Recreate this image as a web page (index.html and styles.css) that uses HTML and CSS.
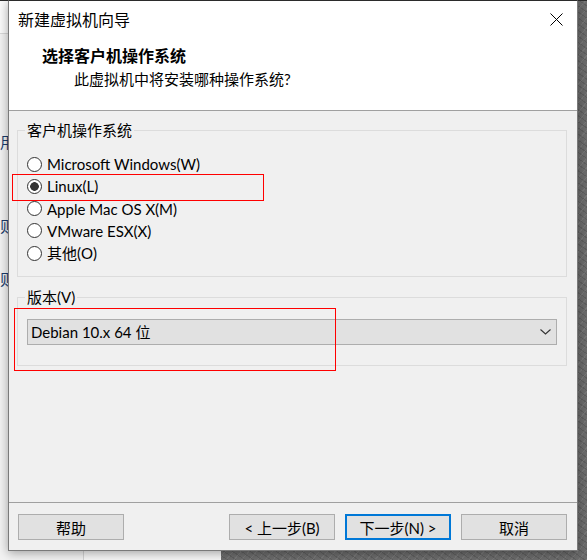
FILE: index.html
```html
<!DOCTYPE html>
<html lang="zh-CN">
<head>
    <meta charset="UTF-8">
    <meta name="viewport" content="width=device-width, initial-scale=1.0">
    <title>新建虚拟机向导</title>
    <link rel="stylesheet" href="styles.css">
</head>
<body>
    <div class="desktop">
        <!-- window behind the dialog -->
        <div class="bg-window">
            <div class="bg-toolbar"></div>
            <div class="bg-sidebar"></div>
            <span class="bg-char bg-char-1">用</span>
            <span class="bg-char bg-char-2">则</span>
            <span class="bg-char bg-char-3">则</span>
        </div>

        <div class="dialog">
            <div class="titlebar">
                <span class="title">新建虚拟机向导</span>
                <span class="close">
                    <svg width="13" height="13" viewBox="0 0 13 13">
                        <path d="M0.5 0.5L12.5 12.5M12.5 0.5L0.5 12.5" stroke="#000" stroke-width="1" fill="none"/>
                    </svg>
                </span>
            </div>

            <div class="header">
                <div class="header-title">选择客户机操作系统</div>
                <div class="header-sub">此虚拟机中将安装哪种操作系统?</div>
            </div>

            <div class="content">
                <fieldset class="group group-os">
                    <legend>客户机操作系统</legend>
                    <div class="radio-list">
                        <label class="radio-row"><input type="radio" name="os" class="radio">Microsoft Windows(W)</label>
                        <label class="radio-row"><input type="radio" name="os" class="radio" checked>Linux(L)</label>
                        <label class="radio-row"><input type="radio" name="os" class="radio">Apple Mac OS X(M)</label>
                        <label class="radio-row"><input type="radio" name="os" class="radio">VMware ESX(X)</label>
                        <label class="radio-row"><input type="radio" name="os" class="radio">其他(O)</label>
                    </div>
                </fieldset>

                <fieldset class="group group-version">
                    <legend>版本(V)</legend>
                    <div class="combo">
                        <span>Debian 10.x 64 位</span>
                        <svg width="11" height="6" viewBox="0 0 11 6">
                            <path d="M0.5 0.5L5.5 5L10.5 0.5" stroke="#333" stroke-width="1.1" fill="none"/>
                        </svg>
                    </div>
                </fieldset>
            </div>

            <div class="footer">
                <button class="btn btn-help">帮助</button>
                <button class="btn">&lt; 上一步(B)</button>
                <button class="btn btn-primary">下一步(N) &gt;</button>
                <button class="btn">取消</button>
            </div>
        </div>

        <!-- red annotation boxes -->
        <div class="mark mark-linux"></div>
        <div class="mark mark-version"></div>
    </div>
</body>
</html>
```

FILE: styles.css
```css
body {
    margin: 0;
    font-family: Lato, "Noto Sans CJK SC", sans-serif;
    font-size: 15px;
    color: #000;
}
.desktop {
    position: relative;
    width: 587px;
    height: 560px;
    overflow: hidden;
    background-color: #6c6c6c;
    background-image:
        linear-gradient(#2b2b2b, #2b2b2b),
        repeating-linear-gradient(35deg, rgba(0,0,0,0.12) 0 1px, transparent 1px 5px),
        repeating-linear-gradient(-50deg, rgba(255,255,255,0.08) 0 1px, transparent 1px 6px);
    background-size: 100% 1px, auto, auto;
    background-repeat: no-repeat, repeat, repeat;
}
.bg-window {
    position: absolute;
    left: 0;
    top: 1px;
    width: 221px;
    height: 559px;
    background: #f7f7f7;
}
.bg-toolbar {
    height: 32px;
    border-bottom: 1px solid #d9d9d9;
    background: #fbfbfb;
}
.bg-sidebar {
    width: 83px;
    height: 526px;
    border-right: 1px solid #d4d4d4;
    background: #f3f3f3;
}
.bg-char {
    position: absolute;
    left: 0;
    font-family: "Noto Sans CJK SC", sans-serif;
    font-size: 15px;
    line-height: 20px;
    color: #1a3a6a;
}
.bg-char-1 { top: 131px; }
.bg-char-2 { top: 215px; }
.bg-char-3 { top: 268px; }

.dialog {
    position: absolute;
    left: 8px;
    top: 0;
    width: 570px;
    height: 551px;
    box-sizing: border-box;
    display: flex;
    flex-direction: column;
    background: #f0f0f0;
    border: 1px solid #7a7a7a;
    border-top-color: #2b2b2b;
    box-shadow: 0 2px 10px rgba(0,0,0,0.35);
}
.titlebar {
    height: 37px;
    display: flex;
    align-items: center;
    justify-content: space-between;
    padding-left: 9px;
    background: #fff;
}
.title {
    font-size: 16px;
    line-height: 20px;
}
.close {
    width: 42px;
    height: 37px;
    display: flex;
    align-items: center;
    justify-content: center;
}
.header {
    height: 73px;
    box-sizing: border-box;
    padding-top: 8px;
    background: #fff;
    border-bottom: 1px solid #a0a0a0;
}
.header-title {
    padding-left: 33px;
    font-size: 16px;
    font-weight: bold;
    line-height: 20px;
}
.header-sub {
    margin-top: 3px;
    padding-left: 65px;
    line-height: 20px;
}
.content {
    flex: 1;
    padding: 9px 10px 0 8px;
}
.group {
    margin: 0;
    min-width: 0;
    padding: 0 10px 12px 7px;
    border: 1px solid #dcdcdc;
}
.group legend {
    padding: 0 2px;
    line-height: 20px;
}
.group-version {
    margin-top: 10px;
    padding-bottom: 20px;
}
.radio-list {
    margin-top: 13px;
}
.radio-row {
    display: flex;
    align-items: center;
    height: 22.25px;
    line-height: 20px;
}
.radio {
    appearance: none;
    width: 15px;
    height: 15px;
    margin: 0 5px 0 2px;
    border: 1px solid #333;
    border-radius: 50%;
    background: #fff;
    box-sizing: border-box;
}
.radio:checked {
    background: radial-gradient(circle, #333 0 4px, #fff 4.6px);
}
.combo {
    display: flex;
    align-items: center;
    justify-content: space-between;
    width: 530px;
    height: 26px;
    margin: 12px 0 0 2px;
    padding: 0 5px 0 3px;
    box-sizing: border-box;
    background: #e1e1e1;
    border: 1px solid #adadad;
    line-height: 20px;
}
.footer {
    display: flex;
    gap: 10px;
    padding: 11px 10px 10px 9px;
    border-top: 1px solid #a0a0a0;
}
.btn {
    width: 106px;
    height: 26px;
    padding: 0;
    font-family: inherit;
    font-size: 15px;
    color: #000;
    background: #e1e1e1;
    border: 1px solid #adadad;
}
.btn-help {
    margin-right: auto;
}
.btn-primary {
    border: 2px solid #0078d7;
}
.mark {
    position: absolute;
    border: 1px solid #f00;
    box-sizing: border-box;
}
.mark-linux {
    left: 12px;
    top: 174px;
    width: 252px;
    height: 27px;
}
.mark-version {
    left: 14px;
    top: 308px;
    width: 322px;
    height: 63px;
}
```
